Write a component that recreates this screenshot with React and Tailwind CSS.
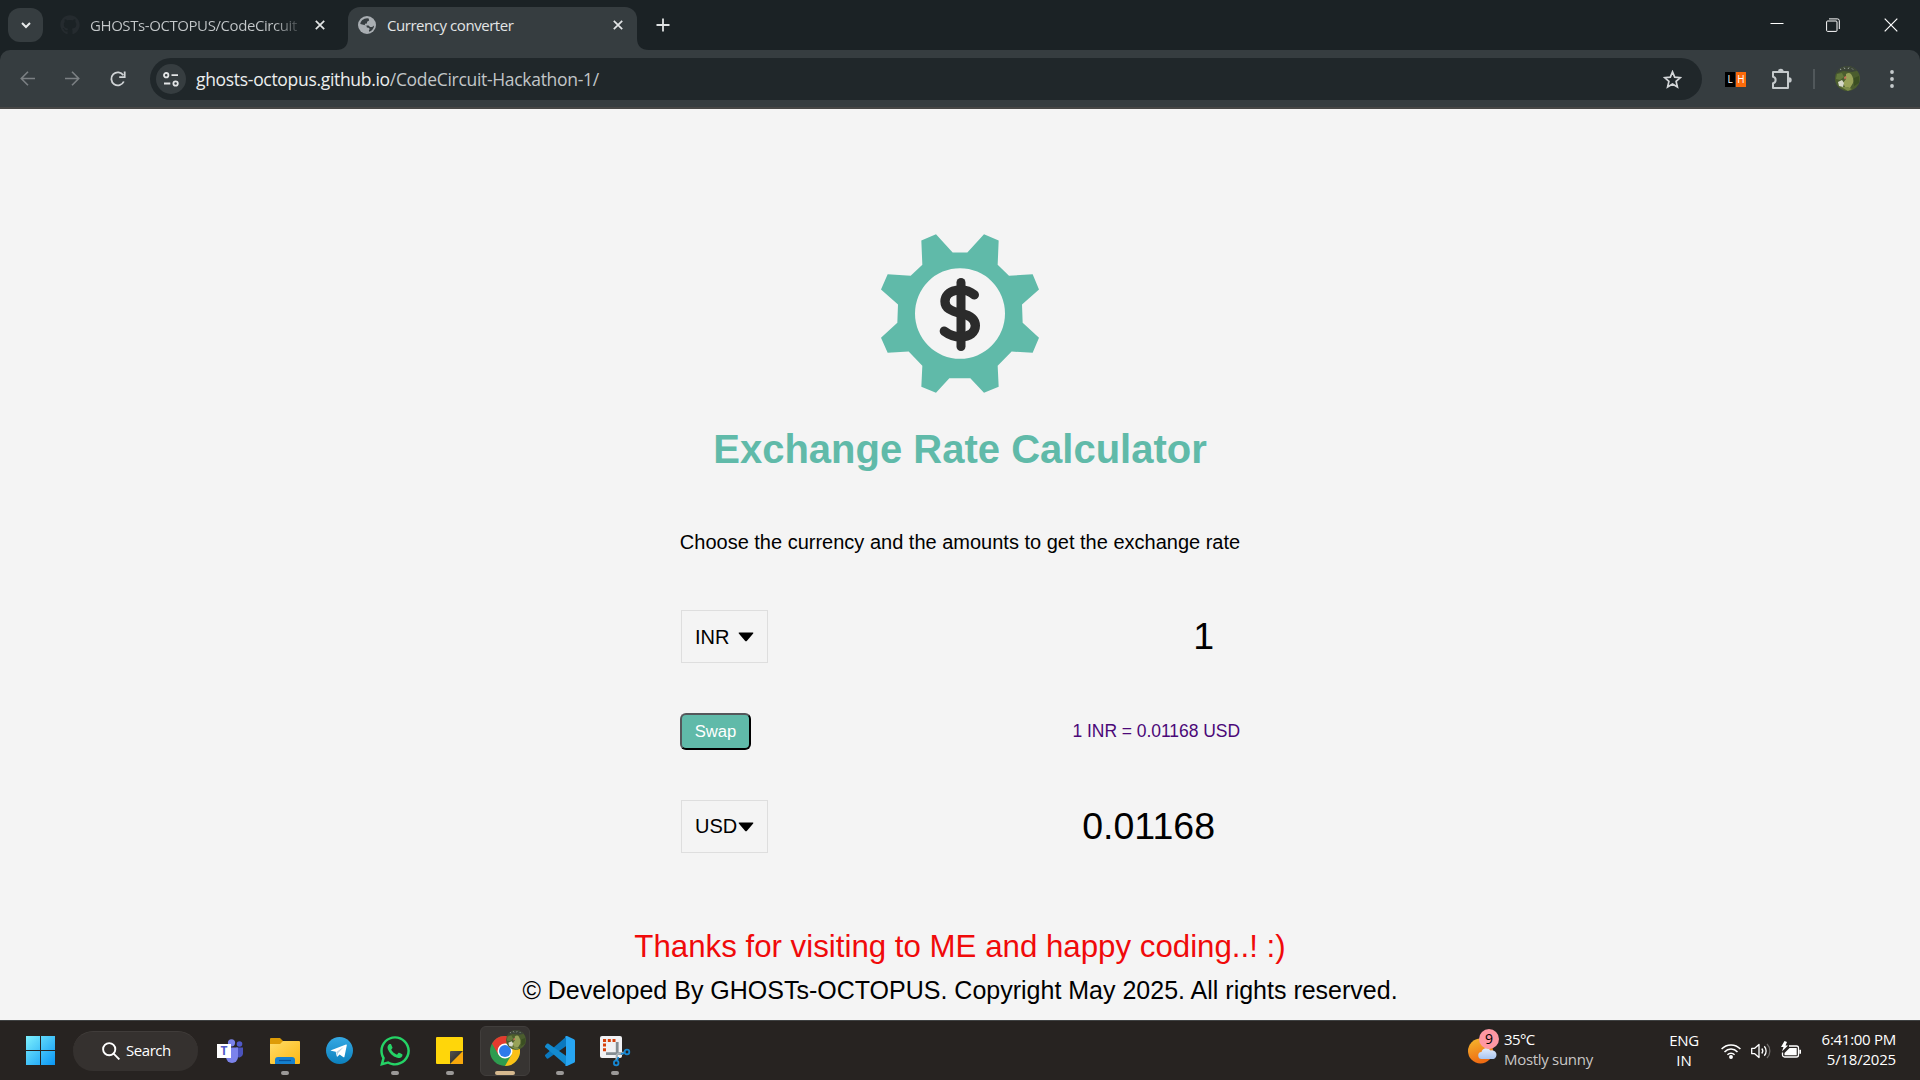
import React from "react";
import { FaGithub, FaWhatsapp } from "react-icons/fa";

const UI = "font-['Open_Sans','Noto_Sans',sans-serif]";

function Close() {
  return (
    <svg className="size-[10px] shrink-0" viewBox="0 0 10 10" stroke="#e3e5e6" strokeWidth="1.7">
      <path d="M.8.8l8.4 8.4M9.2.8L.8 9.2" />
    </svg>
  );
}

function Avatar({ className }) {
  return (
    <svg className={className} viewBox="0 0 25 25">
      <defs>
        <clipPath id="avatarClip"><circle cx="12.5" cy="12.5" r="12.5" /></clipPath>
      </defs>
      <g clipPath="url(#avatarClip)">
        <rect width="25" height="25" fill="#4b5d2e" />
        <path d="M0 0h25v4l-8 2-9-1-8 3z" fill="#3c4538" />
        <path d="M5 2.500l1 1.500M9 1.500l1 1.500M13 3l1-1.500M17 2.500l1 1" stroke="#9ba59c" strokeWidth="1" />
        <path d="M2 8l5-1 2 4-4 3-4-1z" fill="#647a3d" />
        <path d="M11 8q3-2 5 0 3 4 2 9l-3 5-5-1-2-4 3-4z" fill="#98a258" />
        <path d="M9 11l2-1 .5 2-2 1.500z" fill="#c9725a" />
        <path d="M3 16l4-2 2 3-1 4-4-1z" fill="#d6d8c8" />
        <path d="M6 21l6 0 5 2-4 2z" fill="#7c8c48" />
        <path d="M19 12l5-2v7l-5 3z" fill="#3b4f22" />
      </g>
    </svg>
  );
}

function TabStrip() {
  return (
    <div className="flex h-[50px] w-full bg-[#1b2225]">
      <button className="ml-2 mt-2 flex h-[34px] w-[35px] items-center justify-center rounded-xl bg-[#363d40]">
        <svg className="h-[7px] w-[10px]" viewBox="0 0 10 7" fill="none" stroke="#e8eaea" strokeWidth="2">
          <path d="M1 1l4 4 4-4" />
        </svg>
      </button>
      <div className="ml-[17px] flex h-[50px] w-[265px] items-center">
        <FaGithub className="size-5 text-[#252b2f]" />
        <div className="ml-[10px] w-[209px] overflow-hidden whitespace-nowrap bg-linear-to-r from-[#c4c8ca] from-88% to-[#3a4043] bg-clip-text text-[15px] tracking-[-0.420px] text-transparent">
          GHOSTs-OCTOPUS/CodeCircuit
        </div>
        <div className="ml-4"><Close /></div>
      </div>
      <svg className="ml-[11px] h-[50px] w-3" viewBox="0 0 12 50">
        <path d="M12 50H0c8 0 12-4 12-12z" fill="#363d40" />
      </svg>
      <div className="mt-[7px] flex h-[43px] w-[289px] items-center rounded-t-xl bg-[#363d40] pb-[7px] pl-[10px]">
        <svg className="size-[18px]" viewBox="0 0 18 18">
          <circle cx="9" cy="9" r="9" fill="#a9aeb2" />
          <path d="M9.2 2.2l1.5.2.4 2.2-2 1.1-.2 1.7-2 .3v1.6l3.6.1 1.6 1.5 2 .1 2-1.5c-.2 3-2.2 5.5-5 6.300l-.2-1.600.9-1.200-1.200-1.300-1.700-.3-.6-1.800-6-1.600C2.500 5 5.200 2.400 9.200 2.200z" fill="#363d40" />
        </svg>
        <span className="ml-[11px] w-[220px] text-[15px] tracking-[-0.450px] text-[#e3e5e6]">Currency converter</span>
        <div className="ml-[6px]"><Close /></div>
      </div>
      <svg className="h-[50px] w-3" viewBox="0 0 12 50">
        <path d="M0 50h12c-8 0-12-4-12-12z" fill="#363d40" />
      </svg>
      <svg className="ml-[7px] mt-[18px] size-[14px]" viewBox="0 0 14 14" stroke="#dfe2e3" strokeWidth="1.8">
        <path d="M7 .5v13M.5 7h13" />
      </svg>
      <div className="ml-auto flex h-[50px] items-center pr-[22px]">
        <svg className="size-[14px]" viewBox="0 0 14 14"><path d="M.5 5.500h13" stroke="#fff" strokeWidth="1" /></svg>
        <svg className="ml-[42px] size-[14px]" viewBox="0 0 14 14" fill="none" stroke="#fff">
          <rect x=".6" y="3" width="10.400" height="10.400" rx="1" />
          <path d="M3 .9h8.500a1.800 1.800 0 0 1 1.800 1.800V11" />
        </svg>
        <svg className="ml-11 size-[14px]" viewBox="0 0 14 14" stroke="#fff" strokeWidth="1.2"><path d="M.7.700l12.600 12.600M13.300.700L.7 13.300" /></svg>
      </div>
    </div>
  );
}

function Toolbar() {
  return (
    <div className="w-full bg-[#1b2225]">
      <div className="flex h-[59px] items-center rounded-t-[10px] border-b-2 border-[#474746] bg-[#363d40]">
        <svg className="ml-5 size-[15px]" viewBox="0 0 15 15" fill="none" stroke="#7b8083" strokeWidth="1.6"><path d="M15 7.500H1.500M8 .8L1.300 7.500 8 14.200" /></svg>
        <svg className="ml-[30px] size-[15px]" viewBox="0 0 15 15" fill="none" stroke="#7b8083" strokeWidth="1.6"><path d="M0 7.500h13.500M7 .8l6.700 6.700L7 14.200" /></svg>
        <svg className="ml-[30px] size-4" viewBox="0 0 16 16" fill="none" stroke="#d0d4d6" strokeWidth="1.8">
          <path d="M13.800 10.500A6.500 6.500 0 1 1 13.300 4.300" /><path d="M14.700.6v5.600H9.200" />
        </svg>
        <div className="ml-[24px] mt-px flex h-[42px] w-[1552px] items-center rounded-full bg-[#20272a] pl-[6px]">
          <div className="flex size-[30px] items-center justify-center rounded-full bg-[#363d40]">
            <svg className="h-[15px] w-4" viewBox="0 0 16 15" fill="none" stroke="#e3e5e6" strokeWidth="1.8">
              <circle cx="3.200" cy="3.200" r="2.200" /><path d="M8.500 3.200H15M1 11.500h6.300" /><circle cx="12.600" cy="11.500" r="2.200" />
            </svg>
          </div>
          <span className="ml-[10px] text-[17.500px] tracking-[-0.310px] text-[#c2c6c8]"><span className="text-[#eceeee]">ghosts-octopus.github.io</span>/CodeCircuit-Hackathon-1/</span>
          <svg className="ml-auto mr-5 size-[19px]" viewBox="0 0 19 19" fill="none" stroke="#d3d6d8" strokeWidth="1.700">
            <path d="M9.500 1.800l2.200 5.300 5.700.5-4.300 3.800 1.300 5.600-4.900-3-4.900 3 1.300-5.600L1.600 7.600l5.700-.5z" />
          </svg>
        </div>
        <div className="ml-[23px] mt-px flex h-[15px] w-[21px] text-center text-[10px] leading-[15px] text-white">
          <span className="w-[10px] bg-black">L</span><span className="ml-px w-[10px] bg-[#fb6a0a]">H</span>
        </div>
        <svg className="ml-[25px] size-[22px]" viewBox="0 0 22 22">
          <path d="M2 4h15v16H2v-4.800c3.500-.7 3.500-5.700 0-6.400z" fill="none" stroke="#c5cacc" strokeWidth="2" strokeLinejoin="round" />
          <path d="M7 3.500a2.800 2.800 0 0 1 5.600 0zM18 9.200a2.700 2.700 0 0 1 0 5.400z" fill="#c5cacc" />
        </svg>
        <div className="ml-[20px] h-5 w-[2px] bg-[#51585b]" />
        <Avatar className="ml-5 size-[25px]" />
        <svg className="ml-[30px] h-[18px] w-1" viewBox="0 0 4 18" fill="#c5cacc"><circle cx="2" cy="2" r="1.900" /><circle cx="2" cy="9" r="1.900" /><circle cx="2" cy="16" r="1.900" /></svg>
      </div>
    </div>
  );
}

function Gear() {
  return (
    <svg className="h-[159px] w-[158px]" viewBox="63 41.500 474 477">
      <path
        fillRule="evenodd"
        fill="#60baa9"
        d="M228 42L278 97H322L372 42 416 61 413 134 447 167 518 162 537 208 486 253 488 308 537 353 518 398 455 394 413 437 416 500 372 518 331 474H268L228 518 184 500 187 437 146 394 83 398 63 353 112 308 114 253 63 208 83 162 152 167 187 134 184 61zM165 280a135 136 0 1 0 270 0a135 136 0 1 0-270 0z"
      />
      <g fill="none" stroke="#2b2b2b" strokeLinecap="round">
        <path strokeWidth="27" d="M303 187V379" />
        <path strokeWidth="28" d="M343 224C325 209 303 207 286 211C266 215 255 229 255 244C255 264 272 272 303 280C334 286 346 299 346 317C346 336 329 350 302 350C282 350 265 342 253 333" />
      </g>
    </svg>
  );
}

function CurrencySelect({ code, textClass = "" }) {
  return (
    <div className="flex h-[53px] w-[87px] items-center border border-[#dedede] pl-[13px] text-[20px] leading-6 text-black">
      <span className={`w-[43px] whitespace-nowrap ${textClass}`}>{code}</span>
      <svg className="h-[10px] w-4 shrink-0" viewBox="0 0 16 10"><path d="M1.200.5h13.600q1 0 .4.900L9 8.800q-1 1-2 0L.8 1.400q-.6-.9.400-.9z" /></svg>
    </div>
  );
}

function Converter() {
  return (
    <main className="flex h-[911px] flex-col items-center bg-[#f4f4f4] pt-[125px] font-['Liberation_Sans',Arial,sans-serif] text-black">
      <Gear />
      <h1 className="mt-[33px] whitespace-nowrap text-[40px] font-bold leading-[46px] text-[#60baa9]">Exchange Rate Calculator</h1>
      <p className="mt-[58px] whitespace-nowrap text-[20px] leading-6">Choose the currency and the amounts to get the exchange rate</p>
      <div className="mt-14 flex w-[560px] items-center justify-between pl-px">
        <CurrencySelect code="INR" />
        <span className="mb-px mr-[26px] text-[37.500px] leading-[42px]">1</span>
      </div>
      <div className="mt-[50px] flex w-[560px] items-center justify-between">
        <button className="h-[37px] w-[71px] rounded-[6px] border-2 border-b-black border-l-[#55575b] border-r-black border-t-[#55575b] bg-[#60baa9] pt-px text-[16.667px] leading-5 text-white">Swap</button>
        <span className="mb-px text-[17.500px] leading-5 tracking-[-0.050px] text-[#4b0878]">1 INR = 0.01168 USD</span>
      </div>
      <div className="mt-[50px] flex w-[560px] items-center justify-between pl-px">
        <CurrencySelect code="USD" textClass="mb-[2px]" />
        <span className="mb-px mr-[25px] text-[37.500px] leading-[42px]">0.01168</span>
      </div>
      <p className="mt-[76px] whitespace-nowrap text-[31.250px] leading-9 text-[#f00a0a]">Thanks for visiting to ME and happy coding..! :)</p>
      <p className="mt-[11px] whitespace-nowrap text-[25px] leading-7">© Developed By GHOSTs-OCTOPUS. Copyright May 2025. All rights reserved.</p>
    </main>
  );
}

function TaskItem({ children, running, active }) {
  return (
    <div className="flex w-[55px] justify-center">
      <div className={active ? "flex h-[50px] w-[50px] flex-col items-center rounded-md border border-[#413e3c] bg-[#373432] pt-[9px]" : "flex h-[50px] w-[50px] flex-col items-center pt-[10px]"}>
        <div className="flex size-[30px] items-center justify-center">{children}</div>
        {running && <div className={active ? "mt-[5px] h-1 w-5 rounded-full bg-[#d6b98f]" : "mt-[5px] h-1 w-2 rounded-full bg-[#9b9998]"} />}
      </div>
    </div>
  );
}

function Apps() {
  return (
    <div className="ml-[4px] flex">
      <TaskItem>
        <svg className="h-6 w-[26px]" viewBox="0 0 26 24">
          <circle cx="22.500" cy="5" r="2.800" fill="#5059c9" /><path d="M19 8.500h7v6.500a4 4 0 0 1-7 2z" fill="#4b53bc" />
          <circle cx="14.500" cy="3.800" r="3.600" fill="#7b83eb" /><path d="M9 8.500h12V18a5.500 5.500 0 0 1-12 0z" fill="#7b83eb" />
          <rect y="5" width="14" height="14" fill="#fff" /><text x="7" y="16" textAnchor="middle" fontSize="12" fontWeight="700" fill="#5059c9">T</text>
        </svg>
      </TaskItem>
      <TaskItem running>
        <svg className="size-[30px]" viewBox="0 0 30 30">
          <defs><linearGradient id="folder" x2="1" y2="1"><stop stopColor="#ffdc68" /><stop offset="1" stopColor="#fdb813" /></linearGradient></defs>
          <path d="M0 3q0-1 1-1h9l3 3v4H0z" fill="#dd9b06" /><path d="M0 8h10l3-3h16q1 0 1 1v21q0 1-1 1H1q-1 0-1-1z" fill="url(#folder)" />
          <path d="M5 28v-4q0-3 3-3h14q3 0 3 3v4z" fill="#1580cf" /><path d="M9 24.500h12" stroke="#07529b" strokeWidth="1.200" />
        </svg>
      </TaskItem>
      <TaskItem>
        <svg className="size-[27px]" viewBox="0 0 27 27">
          <defs><linearGradient id="tg" x2="0" y2="1"><stop stopColor="#35a9e4" /><stop offset="1" stopColor="#0c80bd" /></linearGradient></defs>
          <circle cx="13.500" cy="13.500" r="13.500" fill="url(#tg)" />
          <path d="M5 13.200L20 7.500q1-.3.800.8L18.500 19.500q-.3 1.300-1.400.6l-3.500-2.600-2 2q-.7.500-.9-.5l-1-4.200-4.600-1q-.9-.3-.1-.6z" fill="#fff" /><path d="M10.200 15l7.400-5-5.600 6.300-.4 2.500z" fill="#b7d3e4" />
        </svg>
      </TaskItem>
      <TaskItem running><FaWhatsapp className="size-[34px] shrink-0 text-[#25d366]" /></TaskItem>
      <TaskItem running>
        <svg className="size-[27px]" viewBox="0 0 27 27">
          <defs><linearGradient id="fold" x2=".6" y2=".6"><stop stopColor="#55534f" /><stop offset="1" stopColor="#35332f" /></linearGradient></defs>
          <path d="M1 0h25q1 0 1 1v25q0 1-1 1H1q-1 0-1-1V1q0-1 1-1z" fill="#ffd60a" /><path d="M14 27L27 14v12q0 1-1 1z" fill="#f8a80c" /><path d="M14 27V15q0-1 1-1h12z" fill="url(#fold)" />
        </svg>
      </TaskItem>
      <TaskItem running active>
        <div className="relative size-[30px]">
          <svg className="size-[30px]" viewBox="0 0 30 30">
            <circle cx="15" cy="15" r="15" fill="#2e9c4f" />
            <path d="M2 7.500A15 15 0 0 1 28 7.500H15L8.500 18.750z" fill="#e33b2e" />
            <path d="M28 7.500A15 15 0 0 1 15 30L21.500 18.750 15 7.500z" fill="#fbc116" />
            <circle cx="15" cy="15" r="7.500" fill="#fff" /><circle cx="15" cy="15" r="6" fill="#2d7bea" />
          </svg>
          <Avatar className="absolute -top-[6px] left-4 size-5" />
        </div>
      </TaskItem>
      <TaskItem running>
        <svg className="size-[30px]" viewBox="0 0 30 30">
          <path d="M.3 18.800L22 0v9.500L3.200 22.600q-.8.300-1.400-.2L.2 20.300q-.6-.8.100-1.500z" fill="#0b78be" />
          <path d="M.3 11.200q-.7-.7-.1-1.500L1.800 7.800q.6-.5 1.400-.2L22 20.500V30z" fill="#138bd0" />
          <path d="M22 0l7 3.200q1 .5 1 1.500v20.600q0 1-1 1.500L22 30q-1 .2-2-.8l1-1V2l-1-1q1-1.200 2-1z" fill="#27a5f2" />
        </svg>
      </TaskItem>
      <TaskItem running>
        <svg className="h-[30px] w-[30px] overflow-visible" viewBox="0 0 30 30" fill="none">
          <rect width="22" height="22" rx="2" fill="#f1f1f4" />
          <path d="M15.500 4.500h-11v12" stroke="#d8410c" strokeWidth="3" strokeDasharray="3 1.700" />
          <path d="M17.200 6v11.700h6M6 17.700h11" stroke="#858d93" strokeWidth="2.800" /><path d="M17 18l7-1.500M17 18l-.500 6" stroke="#a9b1b7" strokeWidth="2.200" />
          <circle cx="27" cy="16" r="2.300" stroke="#1688d4" strokeWidth="1.800" /><circle cx="16.200" cy="27" r="2.300" stroke="#1688d4" strokeWidth="1.800" /><path d="M24.500 17l-3.500 1M17 24.500l1.500-3.500" stroke="#1688d4" strokeWidth="1.800" />
        </svg>
      </TaskItem>
    </div>
  );
}

function Taskbar() {
  return (
    <footer className="flex h-[60px] w-full items-center border-t border-[#3f4142] bg-[#272321] text-[15px] text-white">
      <svg className="ml-[26px] size-[29px]" viewBox="0 0 29 29">
        <defs><linearGradient id="win" x2="1" y2="1"><stop stopColor="#7df0fd" /><stop offset="1" stopColor="#0a96f5" /></linearGradient></defs>
        <path d="M0 0h14v14H0zM15 0h14v14H15zM0 15h14v14H0zM15 15h14v14H15z" fill="url(#win)" />
      </svg>
      <div className="ml-[18px] flex h-10 w-[125px] items-center rounded-full border-t border-[#403c3a] bg-[#35312f] pb-px pl-[29px]">
        <svg className="size-[18px]" viewBox="0 0 18 18" fill="none" stroke="#fff" strokeWidth="1.900"><circle cx="7.200" cy="7.200" r="6.100" /><path d="M11.600 11.600l5.800 5.800" /></svg>
        <span className="mb-px ml-[6px] tracking-[-0.450px]">Search</span>
      </div>
      <Apps />
      <div className="ml-auto flex items-center pb-[3px] pr-6">
        <div className="relative mb-[3px] size-8">
          <svg className="size-8" viewBox="0 0 32 32">
            <defs>
              <linearGradient id="sun" x2=".3" y2="1"><stop stopColor="#f5b92e" /><stop offset="1" stopColor="#ef6c13" /></linearGradient>
              <linearGradient id="cloud" x2="0" y2="1"><stop stopColor="#e2ecfb" /><stop offset="1" stopColor="#a8c4ef" /></linearGradient>
            </defs>
            <circle cx="12.500" cy="19" r="12.500" fill="url(#sun)" /><path d="M14 27a3.500 3.500 0 0 1-.500-7 5 5 0 0 1 9-1.500 3.500 3.500 0 0 1 3 8.500z" fill="url(#cloud)" />
          </svg>
          <span className="absolute -top-[3px] left-[11px] flex size-[20px] items-center justify-center rounded-full bg-[#ff97a3] text-[14px] text-black">9</span>
        </div>
        <div className="ml-[4px] w-[165px] leading-5"><div className="tracking-[-0.6px]">35°C</div><div className="tracking-[-0.300px] text-[#c9c7c6]">Mostly sunny</div></div>
        <div className="mt-[2px] w-[30px] text-center leading-5"><div className="tracking-[-0.3px]">ENG</div><div>IN</div></div>
        <svg className="ml-[22px] mt-[3px] h-4 w-5" viewBox="0 0 20 16" fill="none" stroke="#fff" strokeWidth="1.500"><path d="M.6 6a13 13 0 0 1 18.800 0M3.500 8.900a9 9 0 0 1 13 0M6.400 11.700a5 5 0 0 1 7.200 0" /><circle cx="10" cy="14" r="1.200" fill="#fff" /></svg>
        <svg className="ml-[10px] mt-[3px] h-4 w-5" viewBox="0 0 20 16" fill="none" stroke="#fff" strokeWidth="1.300"><path d="M.7 5.300h3L8 1.500v13l-4.300-3.800h-3z" strokeLinejoin="round" /><path d="M10.800 5.500a4 4 0 0 1 0 5M13.300 3.300a7 7 0 0 1 0 9.400" /><path d="M16 1a10 10 0 0 1 0 14" stroke="#6d6a68" /></svg>
        <svg className="ml-[10px] mt-px h-[18px] w-5" viewBox="0 0 20 18" fill="none"><path d="M8 5h7.500a2 2 0 0 1 2 2v7a2 2 0 0 1-2 2h-12a2 2 0 0 1-2-2v-2.500" stroke="#fff" strokeWidth="1.300" /><path d="M8.500 7H15.700v7.200H3.500V12z" fill="#fff" /><path d="M18.300 8.800h1.700v4h-1.700zM3.500 0L0 6h2.500L1 10.500 7 4.500H4.500L6 1z" fill="#fff" /></svg>
        <div className="w-[95px] whitespace-nowrap text-right leading-5"><div className="tracking-[-0.280px]">6:41:00 PM</div><div className="tracking-[-0.2px]">5/18/2025</div></div>
      </div>
    </footer>
  );
}

export default function App() {
  return (
    <div className={`flex h-[1080px] w-[1920px] flex-col overflow-hidden ${UI}`}>
      <TabStrip />
      <Toolbar />
      <Converter />
      <Taskbar />
    </div>
  );
}
